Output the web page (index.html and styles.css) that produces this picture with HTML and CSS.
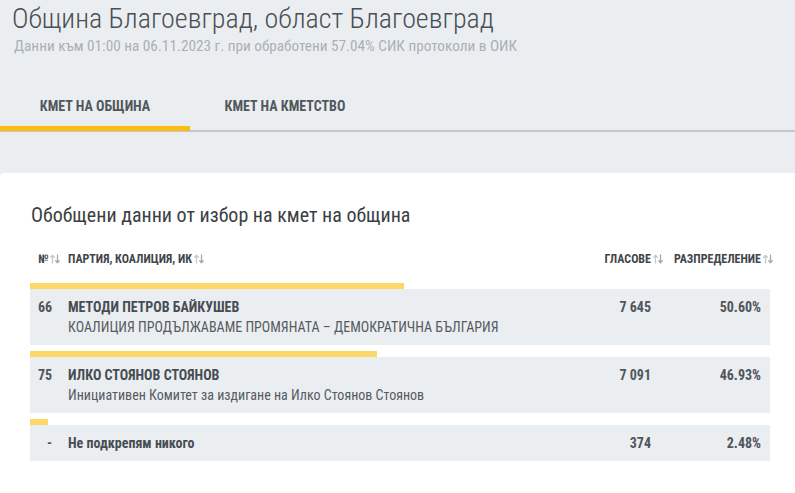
FILE: index.html
```html
<!DOCTYPE html>
<html lang="bg">
<head>
<meta charset="utf-8">
<title>Община Благоевград</title>
<link rel="stylesheet" href="styles.css">
</head>
<body>
<header class="page-head">
  <h1 class="title">Община Благоевград, област Благоевград</h1>
  <p class="subtitle">Данни към 01:00 на 06.11.2023 г. при обработени 57.04% СИК протоколи в ОИК</p>
</header>
<nav class="tabs">
  <div class="tab active">КМЕТ НА ОБЩИНА</div>
  <div class="tab">КМЕТ НА КМЕТСТВО</div>
</nav>
<main class="card">
  <h2 class="card-title">Обобщени данни от избор на кмет на община</h2>
  <div class="table">
    <div class="row head">
      <div class="c-num"><span class="sort-wrap">№<svg class="sort" viewBox="0 0 10 10"><path d="M2.5 9V1.5M0.8 3.2L2.5 1.3L4.2 3.2" class="up"/><path d="M7.5 1V8.5M5.8 6.8L7.5 8.7L9.2 6.8" class="down"/></svg></span></div>
      <div class="c-name"><span class="sort-wrap">ПАРТИЯ, КОАЛИЦИЯ, ИК<svg class="sort" viewBox="0 0 10 10"><path d="M2.5 9V1.5M0.8 3.2L2.5 1.3L4.2 3.2" class="up"/><path d="M7.5 1V8.5M5.8 6.8L7.5 8.7L9.2 6.8" class="down"/></svg></span></div>
      <div class="c-votes"><span class="sort-wrap">ГЛАСОВЕ<svg class="sort hang" viewBox="0 0 10 10"><path d="M2.5 9V1.5M0.8 3.2L2.5 1.3L4.2 3.2" class="up"/><path d="M7.5 1V8.5M5.8 6.8L7.5 8.7L9.2 6.8" class="down"/></svg></span></div>
      <div class="c-pct"><span class="sort-wrap">РАЗПРЕДЕЛЕНИЕ<svg class="sort hang" viewBox="0 0 10 10"><path d="M2.5 9V1.5M0.8 3.2L2.5 1.3L4.2 3.2" class="up"/><path d="M7.5 1V8.5M5.8 6.8L7.5 8.7L9.2 6.8" class="down"/></svg></span></div>
    </div>

    <div class="entry">
      <div class="bar" style="width:50.60%"></div>
      <div class="row">
        <div class="c-num">66</div>
        <div class="c-name"><div class="name">МЕТОДИ ПЕТРОВ БАЙКУШЕВ</div><div class="party">КОАЛИЦИЯ ПРОДЪЛЖАВАМЕ ПРОМЯНАТА – ДЕМОКРАТИЧНА БЪЛГАРИЯ</div></div>
        <div class="c-votes">7 645</div>
        <div class="c-pct">50.60%</div>
      </div>
    </div>

    <div class="entry">
      <div class="bar" style="width:46.93%"></div>
      <div class="row">
        <div class="c-num">75</div>
        <div class="c-name"><div class="name">ИЛКО СТОЯНОВ СТОЯНОВ</div><div class="party">Инициативен Комитет за издигане на Илко Стоянов Стоянов</div></div>
        <div class="c-votes">7 091</div>
        <div class="c-pct">46.93%</div>
      </div>
    </div>

    <div class="entry">
      <div class="bar" style="width:2.48%"></div>
      <div class="row">
        <div class="c-num">-</div>
        <div class="c-name"><div class="name none">Не подкрепям никого</div></div>
        <div class="c-votes">374</div>
        <div class="c-pct">2.48%</div>
      </div>
    </div>
  </div>
</main>
</body>
</html>
```

FILE: styles.css
```css
html, body {
  margin: 0;
  padding: 0;
}
body {
  background: #ebeef1;
  font-family: Roboto, "Noto Sans", sans-serif;
  font-stretch: 85%;
  color: #444b52;
  width: 795px;
  height: 493px;
  overflow: hidden;
}
.page-head {
  padding: 2px 0 0 12px;
}
.title {
  margin: 0;
  font-size: 28px;
  font-weight: 300;
  line-height: 34px;
  color: #4a4f54;
}
.subtitle {
  margin: 0;
  font-size: 15.25px;
  line-height: 20px;
  color: #a9b0b6;
  padding-left: 2px;
}
.tabs {
  display: flex;
  margin-top: 29px;
  border-bottom: 2px solid #c3c7cb;
}
.tab {
  width: 190px;
  height: 46px;
  display: flex;
  align-items: center;
  justify-content: center;
  font-size: 14px;
  font-weight: 700;
  color: #51575c;
  box-sizing: border-box;
  border-bottom: 5px solid transparent;
  margin-bottom: -1px;
}
.tab.active {
  border-bottom-color: #fbbd12;
}
.card {
  margin-top: 41px;
  background: #fff;
  border-top-left-radius: 4px;
  padding: 30px 25px 40px 30px;
  min-height: 280px;
}
.card-title {
  margin: 0 0 0 1px;
  font-size: 20px;
  font-weight: 400;
  line-height: 24px;
  color: #3a3f44;
}
.table {
  margin-top: 22px;
}
.row {
  display: grid;
  grid-template-columns: 30px 1fr 100px 110px;
  padding: 8px 9px 8px 8px;
  align-items: start;
}
.row.head {
  padding: 0 9px 14px 8px;
  font-size: 12px;
  font-weight: 700;
  color: #41464b;
  line-height: 20px;
}
.c-num {
  text-align: right;
  padding-right: 16px;
  font-weight: 700;
  font-size: 14px;
  line-height: 20px;
}
.head .c-num {
  font-size: 12px;
  padding-right: 10px;
}
.c-votes, .c-pct {
  text-align: right;
  font-weight: 700;
  font-size: 14px;
  line-height: 20px;
  color: #50565c;
}
.head .c-votes, .head .c-pct {
  font-size: 12px;
  color: #41464b;
}
.sort-wrap {
  white-space: nowrap;
}
.sort {
  width: 10px;
  height: 10px;
  margin-left: 2px;
  vertical-align: -1px;
}
.sort.hang {
  margin-right: -12px;
}
.sort path {
  fill: none;
  stroke-width: 1.3;
  stroke-linecap: round;
  stroke-linejoin: round;
}
.sort .up {
  stroke: #c4c9cd;
}
.sort .down {
  stroke: #a3a9ae;
}
.entry {
  margin-bottom: 6px;
}
.bar {
  height: 6px;
  background: #fdd866;
}
.entry .row {
  background: #ebeef1;
}
.name {
  font-size: 14px;
  font-weight: 700;
  line-height: 20px;
  color: #474d53;
}
.party {
  font-size: 14px;
  line-height: 20px;
  color: #555b61;
}
.entry .c-num {
  color: #50565c;
}
```
